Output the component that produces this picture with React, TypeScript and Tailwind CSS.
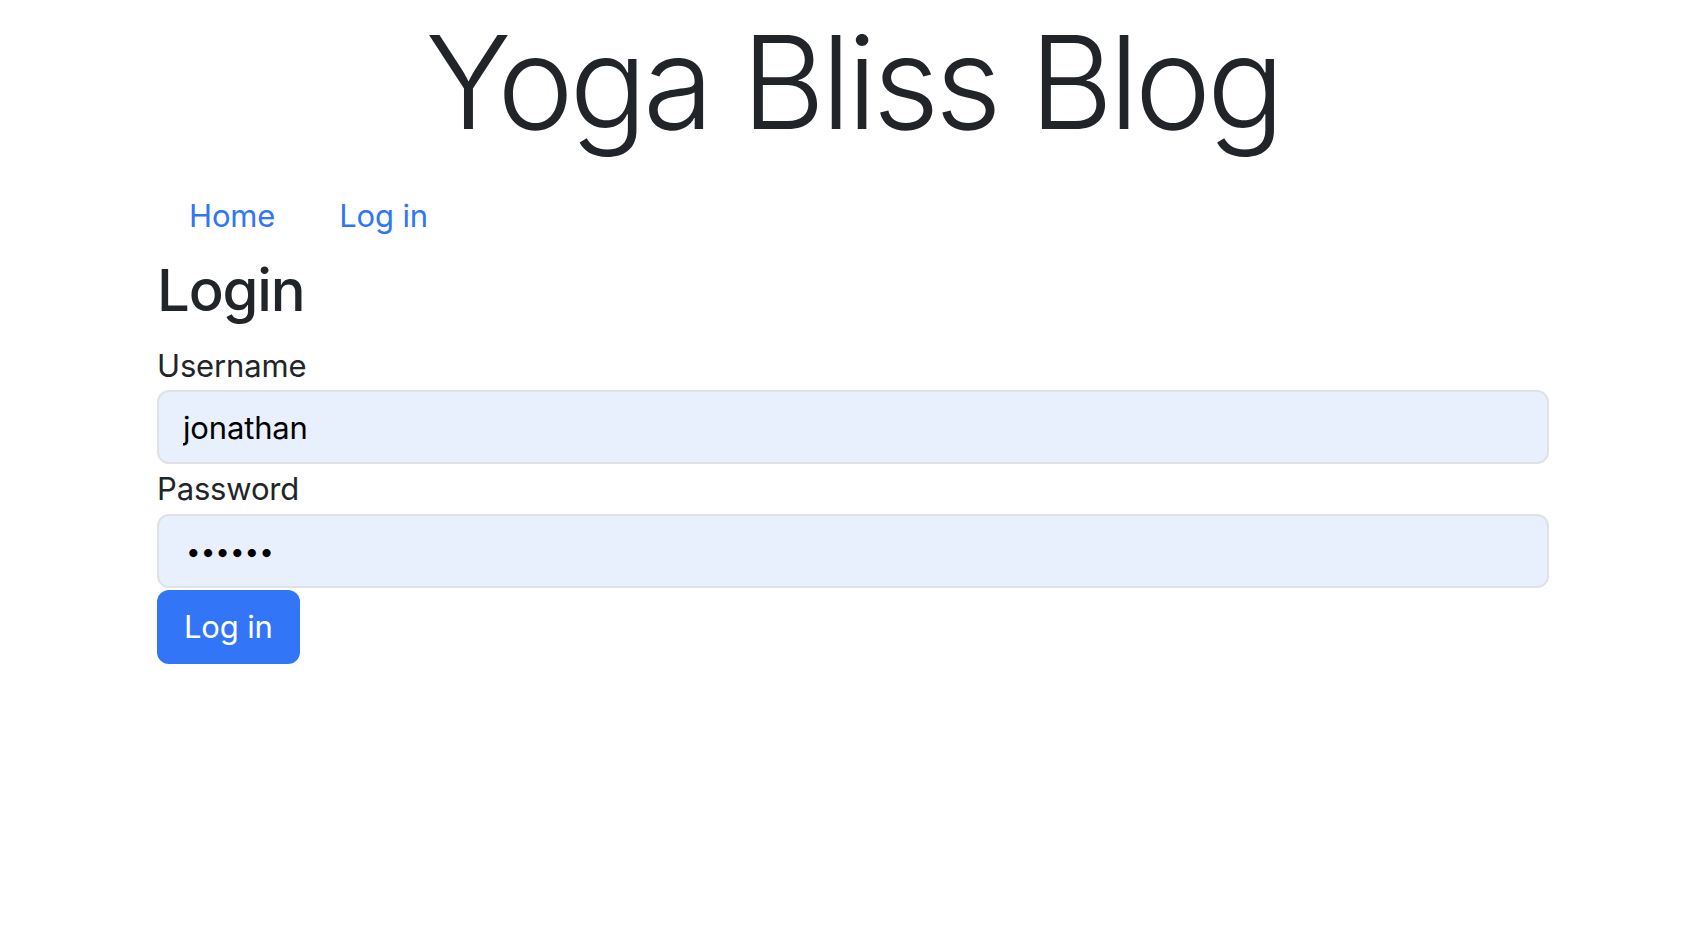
import React, { useState } from "react";

const navLinks = [{ label: "Home" }, { label: "Log in" }];

const App = () => {
  const [username, setUsername] = useState("jonathan");
  const [password, setPassword] = useState("secret");

  return (
    <div className="min-h-[950px] bg-white text-[#212529] font-['Inter',sans-serif] tracking-[-0.01em]">
      <div className="mx-auto w-[1440px] px-6">
        {/* header */}
        <h1 className="pt-[5px] text-center text-[129px] font-[350] tracking-[-0.033em] leading-[1.2] mb-4">
          Yoga Bliss Blog
        </h1>

        {/* nav */}
        <ul className="flex">
          {navLinks.map((item, index) => (
            <li key={index}>
              <a
                href="#"
                className="block px-8 py-4 text-[31px] leading-[48px] text-[#3275f6]"
              >
                {item.label}
              </a>
            </li>
          ))}
        </ul>

        {/* login form */}
        <h2 className="text-[58px] font-medium tracking-[-0.02em] leading-[1.2] mb-4">
          Login
        </h2>
        <form onSubmit={(e) => e.preventDefault()}>
          <label htmlFor="username" className="block text-[31px] leading-[49px]">
            Username
          </label>
          <input
            id="username"
            type="text"
            value={username}
            onChange={(e) => setUsername(e.target.value)}
            className="block w-full h-[74px] px-6 text-[31px] text-black bg-[#e8f0fe] border-2 border-[#dee2e6] rounded-xl outline-none"
          />
          <label htmlFor="password" className="block text-[31px] leading-[50px]">
            Password
          </label>
          <input
            id="password"
            type="password"
            value={password}
            onChange={(e) => setPassword(e.target.value)}
            className="block w-full h-[74px] pl-[27px] pr-6 text-[26px] tracking-[0px] text-black bg-[#e8f0fe] border-2 border-[#dee2e6] rounded-xl outline-none"
          />
          <button
            type="submit"
            className="mt-0.5 h-[74px] px-[27px] text-[31px] text-white bg-[#3275f6] rounded-xl"
          >
            Log in
          </button>
        </form>
      </div>
    </div>
  );
};

export default App;
